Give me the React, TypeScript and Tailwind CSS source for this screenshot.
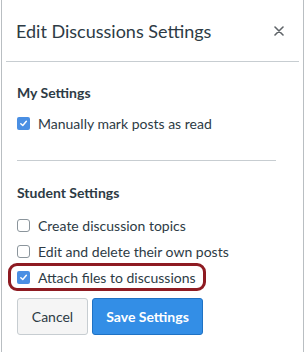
const CheckedBox = () => (
  <span className="flex h-[13px] w-[13px] shrink-0 items-center justify-center rounded-[2px] bg-[#4a8fe3]">
    <svg width="9" height="9" viewBox="0 0 10 10" fill="none">
      <path d="M2 5.2 L4.2 7.3 L8.2 2.6" stroke="white" strokeWidth="1.6" strokeLinecap="round" strokeLinejoin="round" />
    </svg>
  </span>
);

const EmptyBox = () => (
  <span className="h-[13px] w-[13px] shrink-0 rounded-[3px] border border-[#8b959c] bg-white" />
);

const Row = ({ checked, label }: { checked: boolean; label: string }) => (
  <div className="flex h-[26px] items-center gap-[8px]">
    {checked ? <CheckedBox /> : <EmptyBox />}
    <span className="text-[14px] text-[#2d3b45]">{label}</span>
  </div>
);

export default function App() {
  return (
    <div className="relative h-[352px] w-[305px] overflow-hidden bg-white font-['Lato','Liberation_Sans',sans-serif]">
      <div className="ml-px h-full w-[303px] border-x border-[#b9bec2]">
        {/* Header */}
        <div className="flex h-[61px] items-center justify-between pl-[14px] pr-[19px]">
          <h2 className="text-[18px] leading-none text-[#2d3b45]">Edit Discussions Settings</h2>
          <svg width="10" height="10" viewBox="0 0 10 10" className="mt-px">
            <path d="M1 1 L9 9 M9 1 L1 9" stroke="#5f6468" strokeWidth="1.6" strokeLinecap="round" />
          </svg>
        </div>
        <div className="mx-[4px] h-px bg-[#c7cdd1]" />

        {/* Body */}
        <div className="px-[15px] pt-[21px]">
          <h3 className="text-[14px] font-bold leading-[20px] text-[#2d3b45]">My Settings</h3>
          <div className="mt-[7px]">
            <Row checked label="Manually mark posts as read" />
          </div>
          <div className="mt-[24px] mr-[12px] h-px bg-[#c7cdd1]" />

          <h3 className="mt-[22px] text-[14px] font-bold leading-[20px] text-[#2d3b45]">Student Settings</h3>
          <div className="mt-[9px]">
            <Row checked={false} label="Create discussion topics" />
            <Row checked={false} label="Edit and delete their own posts" />
            <Row checked label="Attach files to discussions" />
          </div>

          <div className="mt-[8px] flex gap-[4px]">
            <button className="h-[37px] w-[71px] rounded-[3px] border border-[#c7cdd1] bg-[#f5f5f5] text-[14px] text-[#2d3b45]">
              Cancel
            </button>
            <button className="h-[37px] w-[111px] rounded-[3px] border border-[#1f72c4] bg-[#338ee6] text-[14px] font-bold text-white">
              Save Settings
            </button>
          </div>
        </div>
      </div>

      {/* Annotation highlight */}
      <div className="absolute left-[8px] top-[263px] h-[28px] w-[198px] rounded-[9px] border-[3px] border-[#8e1b22]" />
    </div>
  );
}
